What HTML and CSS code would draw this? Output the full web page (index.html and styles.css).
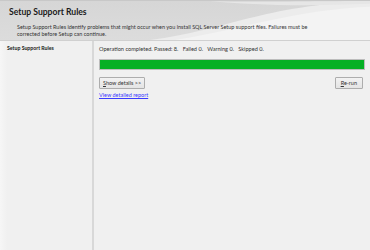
FILE: index.html
```html
<!DOCTYPE html>
<html lang="en">
<head>
    <meta charset="UTF-8">
    <title>Setup Support Rules</title>
    <link rel="stylesheet" href="styles.css">
</head>
<body>
    <div class="header">
        <svg class="swoosh" viewBox="0 0 370 41" preserveAspectRatio="none">
            <path d="M150 41 C230 30 260 5 370 0 L370 41 Z" fill="#ececec"/>
            <path d="M175 41 C250 28 290 10 370 6 L370 41 Z" fill="#f3f3f3"/>
            <path d="M210 0 C260 2 300 0 370 0 L370 3 C300 6 250 4 210 0 Z" fill="#e6e6e6"/>
        </svg>
        <h1>Setup Support Rules</h1>
        <p>Setup Support Rules identify problems that might occur when you install SQL Server Setup support files. Failures must be corrected before Setup can continue.</p>
    </div>

    <div class="main">
        <div class="sidebar">
            <div class="step">Setup Support Rules</div>
        </div>
        <div class="content">
            <div class="status">Operation completed. Passed: 8.&nbsp;&nbsp; Failed 0.&nbsp;&nbsp; Warning 0.&nbsp;&nbsp; Skipped 0.</div>
            <div class="progress"><div class="progress-fill"></div></div>
            <div class="actions">
                <button class="btn"><u>S</u>how details &gt;&gt;</button>
                <button class="btn btn-rerun"><u>R</u>e-run</button>
            </div>
            <a class="report-link" href="#">View detailed report</a>
        </div>
    </div>
</body>
</html>
```

FILE: styles.css
```css
body {
    margin: 0;
    background: #f0f0f0;
    font-family: Lato, "Open Sans", sans-serif;
    color: #1e1e1e;
    width: 370px;
    height: 250px;
    overflow: hidden;
}

.header {
    position: relative;
    height: 41px;
    box-sizing: border-box;
    background: linear-gradient(#d6d6d6, #dcdcdc);
    border-top: 1px solid #c8c8c8;
    border-bottom: 1px solid #d0d0d0;
    padding: 5px 0 0 9px;
}

.swoosh {
    position: absolute;
    left: 0;
    top: 0;
    width: 100%;
    height: 100%;
}

.header h1 {
    position: relative;
    margin: 0;
    font-size: 8.6px;
    font-weight: 700;
    color: #1a1a1a;
    line-height: 13px;
}

.header p {
    position: relative;
    margin: 5px 0 0 8px;
    font-size: 5.5px;
    line-height: 7px;
    width: 302px;
    color: #333;
}

.main {
    display: flex;
    height: 209px;
}

.sidebar {
    width: 94px;
    background: linear-gradient(to right, #f6f6f6 0, #f0f0f0 7px);
    border-right: 2px solid #d8d8d8;
    padding: 4px 0 0 7px;
    box-sizing: border-box;
}

.step {
    font-size: 5.2px;
    font-weight: 700;
    color: #1a1a1a;
}

.content {
    flex: 1;
    padding: 4px 5px 0 5px;
}

.status {
    font-size: 5.6px;
    color: #333;
    line-height: 8px;
}

.progress {
    margin-top: 6px;
    height: 11px;
    border: 1px solid #bcbcbc;
    background: #e6e6e6;
    box-sizing: border-box;
}

.progress-fill {
    height: 100%;
    background: #06b025;
}

.actions {
    display: flex;
    justify-content: space-between;
    margin-top: 7px;
    margin-right: 2px;
}

.btn {
    font-family: inherit;
    font-size: 5.5px;
    color: #333;
    height: 12px;
    padding: 0 3px;
    background: linear-gradient(#f2f2f2, #e4e4e4);
    border: 1px solid #adadad;
    border-radius: 1px;
}

.btn-rerun {
    padding: 0 5px;
}

.report-link {
    display: block;
    margin-top: 2px;
    font-size: 5.5px;
    line-height: 8px;
    color: #3b3bff;
}
```
